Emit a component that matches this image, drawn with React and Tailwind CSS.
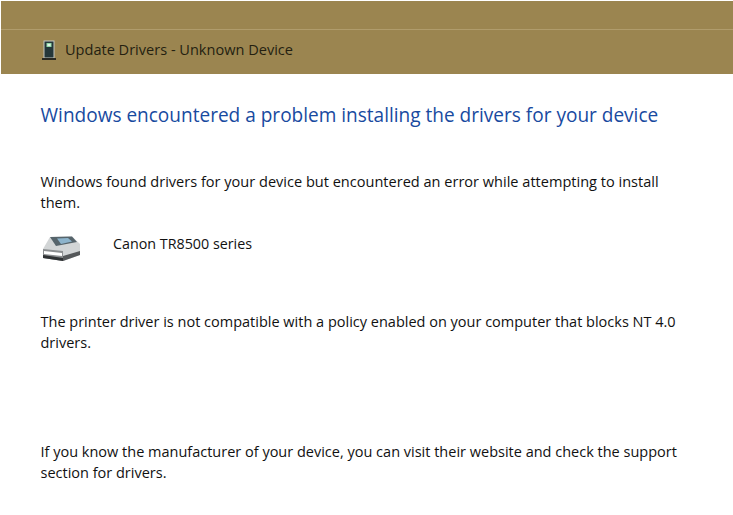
function DeviceIcon() {
  return (
    <svg width="14" height="21" viewBox="0 0 14 21" className="shrink-0">
      <rect x="1.5" y="0.5" width="11" height="18" fill="#c4c8c2" />
      <rect x="2.5" y="1.5" width="9" height="16" fill="#24373a" />
      <rect x="4.5" y="3" width="5" height="4" fill="#8fd8a8" />
      <rect x="5.5" y="4" width="3" height="2" fill="#e4f5e8" />
      <rect x="0" y="18" width="14" height="2" fill="#2b2a22" />
    </svg>
  );
}

function PrinterIcon() {
  return (
    <svg width="38" height="25" viewBox="0 0 38 25" className="shrink-0">
      {/* Cuerpo */}
      <path d="M1 13 L8 1 L30 0.5 L38 8 L38 19 L21 25 L1 22 Z" fill="#d2d5d6" />
      {/* Tapa oscura */}
      <path d="M8 1 L30 0.5 L35 6 L14 10 Z" fill="#56646b" />
      <path d="M15 2.5 L26 2 L30 5.5 L19 8 Z" fill="#8db4cc" />
      {/* Frente */}
      <path d="M21 20 L38 15 L38 19 L21 25 Z" fill="#55585a" />
      {/* Bandeja */}
      <path d="M1 13 L21 15 L21 25 L1 22 Z" fill="#8b8e90" />
      <path d="M2 15 L20 17 L20 20 L2 18 Z" fill="#ffffff" />
      <path d="M1 19 L21 22 L21 25 L1 22 Z" fill="#2f3234" />
    </svg>
  );
}

export default function App() {
  return (
    <div className="w-[733px] h-[515px] bg-white overflow-hidden font-['Open_Sans','Noto_Sans',sans-serif] text-[#111]">
      {/* Barra de titulo */}
      <div className="ml-px mt-px h-[73px] bg-[#9b8550] flex flex-col">
        <div className="h-[28px] border-b border-[#b09c6c] box-content" />
        <div className="flex items-center gap-[9px] pl-[41px] h-[40px]">
          <DeviceIcon />
          <span className="text-[14.55px] text-[#241f10]">Update Drivers - Unknown Device</span>
        </div>
      </div>

      <div className="pl-[40.5px] pr-[40px]">
        <h1 className="mt-[25px] text-[19.05px] leading-[32px] font-normal text-[#184a9f] whitespace-nowrap">
          Windows encountered a problem installing the drivers for your device
        </h1>
        <p className="mt-[40px] text-[14.55px] leading-[21px]">
          Windows found drivers for your device but encountered an error while attempting to install them.
        </p>
        <div className="mt-[20px] flex items-start">
          <div className="w-[72.5px] pt-[3px] pl-px">
            <PrinterIcon />
          </div>
          <span className="text-[14.3px] leading-[21px]">Canon TR8500 series</span>
        </div>
        <p className="mt-[50px] text-[14.5px] leading-[21px]">
          The printer driver is not compatible with a policy enabled on your computer that blocks NT 4.0 drivers.
        </p>
        <p className="mt-[88px] text-[14.5px] leading-[21px]">
          If you know the manufacturer of your device, you can visit their website and check the support section for drivers.
        </p>
      </div>
    </div>
  );
}
